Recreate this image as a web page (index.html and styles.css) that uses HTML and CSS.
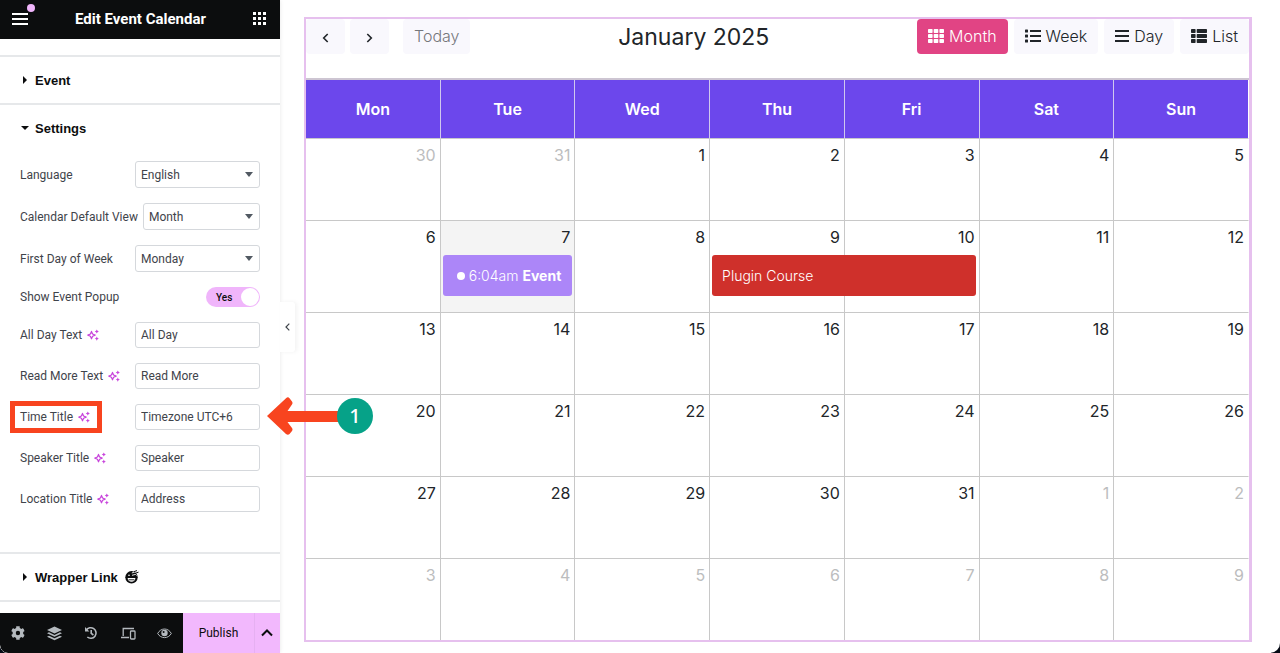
FILE: index.html
```html
<!DOCTYPE html>
<html lang="en">
<head>
<meta charset="utf-8">
<meta name="viewport" content="width=device-width, initial-scale=1">
<title>Edit Event Calendar</title>
<link rel="stylesheet" href="styles.css">
</head>
<body>
<svg class="sprite" aria-hidden="true">
  <symbol id="sparkle" viewBox="0 0 12 12">
    <path d="M4.5 2.4 5.6 5 8.2 6.1 5.6 7.2 4.5 9.8 3.4 7.2.8 6.1 3.4 5Z" fill="none" stroke="currentColor" stroke-width="1.2" stroke-linejoin="round"/>
    <path d="m9.8.4.7 1.400 1.400.7-1.400.7-.7 1.400-.7-1.400-1.400-.7 1.400-.7ZM9.800 7.500l.7 1.400 1.400.7-1.400.7-.7 1.400-.7-1.400-1.400-.7 1.400-.7Z" fill="currentColor"/>
  </symbol>
</svg>
<div class="app">
  <aside class="panel">
    <header class="panel-header">
      <button class="icon-button menu" aria-label="Menu">
        <svg width="16" height="12" viewBox="0 0 16 12"><path d="M0 1h16M0 6h16M0 11h16" stroke="#fff" stroke-width="2"/></svg>
        <span class="notice"></span>
      </button>
      <h1>Edit Event Calendar</h1>
      <button class="icon-button" aria-label="Widgets">
        <svg width="13" height="13" viewBox="0 0 13 13" fill="#fff"><path d="M0 0h3v3H0zM5 0h3v3H5zM10 0h3v3h-3zM0 5h3v3H0zM5 5h3v3H5zM10 5h3v3h-3zM0 10h3v3H0zM5 10h3v3H5zM10 10h3v3h-3z"/></svg>
      </button>
    </header>

    <div class="panel-body">
      <section class="section">
        <button class="section-title"><span class="caret"></span>Event</button>
      </section>
      <section class="section">
        <button class="section-title" aria-expanded="true"><span class="caret open"></span>Settings</button>
        <div class="controls">
          <div class="control">
            <label for="language">Language</label>
            <span class="select"><select id="language"><option>English</option></select></span>
          </div>
          <div class="control">
            <label for="view">Calendar Default View</label>
            <span class="select"><select id="view"><option>Month</option></select></span>
          </div>
          <div class="control">
            <label for="first-day">First Day of Week</label>
            <span class="select"><select id="first-day"><option>Monday</option></select></span>
          </div>
          <div class="control">
            <label for="popup">Show Event Popup</label>
            <span class="switch"><input type="checkbox" id="popup" checked><span>Yes</span></span>
          </div>
          <div class="control">
            <label for="all-day">All Day Text <svg class="sparkle"><use href="#sparkle"/></svg></label>
            <input class="text" id="all-day" type="text" value="All Day">
          </div>
          <div class="control">
            <label for="read-more">Read More Text <svg class="sparkle"><use href="#sparkle"/></svg></label>
            <input class="text" id="read-more" type="text" value="Read More">
          </div>
          <div class="control marked">
            <label for="time-title">Time Title <svg class="sparkle"><use href="#sparkle"/></svg></label>
            <input class="text" id="time-title" type="text" value="Timezone UTC+6">
            <div class="pointer">
              <svg width="74" height="38" viewBox="0 0 74 38"><path d="M0 19 19 1.200Q21-.6 22.500 1.200L25 4.500Q26 6 25 7.500L20.500 14H74v11H20.500L25 31Q26 32.500 25 34L22.500 37Q21 38.600 19 37Z" fill="#f8441f"/></svg>
              <span class="step">1</span>
            </div>
          </div>
          <div class="control">
            <label for="speaker">Speaker Title <svg class="sparkle"><use href="#sparkle"/></svg></label>
            <input class="text" id="speaker" type="text" value="Speaker">
          </div>
          <div class="control">
            <label for="location">Location Title <svg class="sparkle"><use href="#sparkle"/></svg></label>
            <input class="text" id="location" type="text" value="Address">
          </div>
        </div>
      </section>
      <section class="section last">
        <button class="section-title"><span class="caret"></span>Wrapper Link
          <svg class="face" width="14" height="14" viewBox="0 0 14 14">
            <circle cx="6.500" cy="7.300" r="6.200" fill="#0c0d0e"/>
            <path d="M2.600 8h7.800c0 2.200-1.700 3.700-3.900 3.700S2.600 10.200 2.600 8Z" fill="#fff"/>
            <path d="M3.600 9.800h5.800" stroke="#0c0d0e" stroke-width=".9"/>
            <path d="M3 5.600q1-1.400 2 0M7 5.300l3.500-.9 1.200 1.200M6.800 3l4-1.400M10.800 0l1.600 2.200" stroke="#fff" stroke-width=".9" fill="none"/>
            <path d="m9 1.600 3-1M10.500 3.200l3-1" stroke="#0c0d0e" stroke-width="1"/>
          </svg>
        </button>
      </section>
    </div>

    <footer class="panel-footer">
      <button class="tool" aria-label="Settings">
        <svg width="14" height="14" viewBox="0 0 512 512"><path fill="currentColor" d="M487 316l-43-25c4-23 4-47 0-70l43-25c5-3 7-9 6-14-11-36-30-69-55-96-4-4-10-5-15-2l-43 24c-18-15-39-27-61-35V24c0-6-4-11-10-12-36-8-74-8-111 0-5 1-9 6-9 12v49c-23 8-43 20-61 35L85 84c-5-3-11-2-14 2-26 27-45 60-56 96-2 5 1 11 5 14l43 25c-4 23-4 47 0 70l-43 25c-4 3-7 9-5 14 11 36 30 69 56 96 3 4 9 5 14 2l43-24c18 15 38 27 61 35v49c0 6 4 11 9 12 37 8 75 8 111 0 6-1 10-6 10-12v-49c22-8 43-20 61-35l43 24c5 3 11 2 15-2 25-27 44-60 55-96 1-5-1-11-6-14zM254 336a80 80 0 1 1 0-160 80 80 0 0 1 0 160z"/></svg>
      </button>
      <button class="tool" aria-label="Structure">
        <svg width="15" height="15" viewBox="0 0 15 15" fill="currentColor"><path d="M7.500.5 15 4 7.500 7.500 0 4Z"/><path d="m2 6.300 5.500 2.600L13 6.300l2 1-7.500 3.500L0 7.300Z"/><path d="m2 9.700 5.500 2.600L13 9.700l2 1-7.500 3.600L0 10.700Z"/></svg>
      </button>
      <button class="tool" aria-label="History">
        <svg width="14" height="14" viewBox="0 0 14 14" fill="none" stroke="currentColor" stroke-width="1.600"><path d="M2.200 4.300A5.300 5.300 0 1 1 3.300 11M7.200 4v3.300l2.200 1.700"/><path d="M1 1v4.400h4.400Z" fill="currentColor" stroke="none"/></svg>
      </button>
      <button class="tool" aria-label="Responsive mode">
        <svg width="15" height="13" viewBox="0 0 15 13" fill="none" stroke="currentColor" stroke-width="1.300"><path d="M2.200 9V1.500H13M0 10.500h8" /><rect x="9.500" y="4" width="4.500" height="8" rx=".8"/></svg>
      </button>
      <button class="tool" aria-label="Preview">
        <svg width="15" height="11" viewBox="0 0 15 11" fill="none" stroke="currentColor"><path d="M.7 5.500C3.700-.5 11.300-.5 14.300 5.500 11.300 11 3.700 11 .7 5.500Z"/><circle cx="7.500" cy="5" r="3.200" fill="currentColor" stroke="none"/><circle cx="6.600" cy="4" r="1" fill="#0c0d0e" stroke="none"/></svg>
      </button>
      <button class="publish">Publish</button>
      <button class="publish-more" aria-label="Save options">
        <svg width="12" height="8" viewBox="0 0 12 8"><path d="m1 6.500 5-5 5 5" fill="none" stroke="#0c0d0e" stroke-width="2"/></svg>
      </button>
    </footer>
    <button class="collapse" aria-label="Hide panel">
      <svg width="5" height="8" viewBox="0 0 5 8"><path d="M4.300.7 1 4l3.300 3.300" fill="none" stroke="#3f444b" stroke-width="1.200"/></svg>
    </button>
  </aside>

  <main class="preview">
    <div class="calendar">
      <div class="toolbar">
        <div class="group">
          <button class="nav" aria-label="Previous"><svg width="7" height="10" viewBox="0 0 7 10"><path d="M5.700 1 1.700 5l4 4" fill="none" stroke="#212529" stroke-width="1.600"/></svg></button>
          <button class="nav" aria-label="Next"><svg width="7" height="10" viewBox="0 0 7 10"><path d="m1.300 1 4 4-4 4" fill="none" stroke="#212529" stroke-width="1.600"/></svg></button>
          <button class="today" disabled>Today</button>
        </div>
        <h2>January 2025</h2>
        <div class="group views">
          <button class="view active"><svg width="16" height="14" viewBox="0 0 16 14" fill="currentColor"><rect width="4.600" height="4" rx=".7"/><rect x="5.700" width="4.600" height="4" rx=".7"/><rect x="11.400" width="4.600" height="4" rx=".7"/><rect y="5" width="4.600" height="4" rx=".7"/><rect x="5.700" y="5" width="4.600" height="4" rx=".7"/><rect x="11.400" y="5" width="4.600" height="4" rx=".7"/><rect y="10" width="4.600" height="4" rx=".7"/><rect x="5.700" y="10" width="4.600" height="4" rx=".7"/><rect x="11.400" y="10" width="4.600" height="4" rx=".7"/></svg>Month</button>
          <button class="view"><svg width="16" height="14" viewBox="0 0 16 14" fill="currentColor"><rect y=".5" width="3" height="3" rx=".6"/><rect y="5.500" width="3" height="3" rx=".6"/><rect y="10.500" width="3" height="3" rx=".6"/><path d="M5 1h11v2H5zM5 6h11v2H5zM5 11h11v2H5z"/></svg>Week</button>
          <button class="view"><svg width="14" height="14" viewBox="0 0 14 14" fill="currentColor"><path d="M0 1h14v2H0zM0 6h14v2H0zM0 11h14v2H0z"/></svg>Day</button>
          <button class="view"><svg width="16" height="14" viewBox="0 0 16 14" fill="currentColor"><rect width="4.600" height="4" rx=".7"/><rect x="5.700" width="10.300" height="4" rx=".7"/><rect y="5" width="4.600" height="4" rx=".7"/><rect x="5.700" y="5" width="10.300" height="4" rx=".7"/><rect y="10" width="4.600" height="4" rx=".7"/><rect x="5.700" y="10" width="10.300" height="4" rx=".7"/></svg>List</button>
        </div>
      </div>
      <div class="grid">
        <table>
          <thead>
            <tr><th>Mon</th><th>Tue</th><th>Wed</th><th>Thu</th><th>Fri</th><th>Sat</th><th>Sun</th></tr>
          </thead>
          <tbody>
            <tr><td class="other">30</td><td class="other">31</td><td>1</td><td>2</td><td>3</td><td>4</td><td>5</td></tr>
            <tr>
              <td>6</td>
              <td class="current">7<a class="event timed" href="#event"><span class="dot"></span><span>6:04am</span><b>Event</b></a></td>
              <td>8</td>
              <td>9<a class="event course" href="#course">Plugin Course</a></td>
              <td>10</td><td>11</td><td>12</td>
            </tr>
            <tr><td>13</td><td>14</td><td>15</td><td>16</td><td>17</td><td>18</td><td>19</td></tr>
            <tr><td>20</td><td>21</td><td>22</td><td>23</td><td>24</td><td>25</td><td>26</td></tr>
            <tr><td>27</td><td>28</td><td>29</td><td>30</td><td>31</td><td class="other">1</td><td class="other">2</td></tr>
            <tr><td class="other">3</td><td class="other">4</td><td class="other">5</td><td class="other">6</td><td class="other">7</td><td class="other">8</td><td class="other">9</td></tr>
          </tbody>
        </table>
      </div>
    </div>
  </main>
</div>
</body>
</html>
```
FILE: styles.css
```css
* { box-sizing: border-box; }

body {
  margin: 0;
  background: #050a14;
  font-family: Roboto, "Liberation Sans", sans-serif;
  font-size: 12px;
  color: #3f444b;
}

button {
  border: 0;
  padding: 0;
  background: none;
  font: inherit;
  color: inherit;
}

.sprite { position: absolute; width: 0; height: 0; }

.app {
  display: flex;
  min-height: 100vh;
  background: #fff;
  border-radius: 0 0 10px 8px;
  overflow: hidden;
}

/* Editor panel */
.panel {
  position: relative;
  z-index: 1;
  display: flex;
  flex-direction: column;
  flex: 0 0 280px;
  background: #fff;
  box-shadow: 0 0 4px rgba(0, 0, 0, .1);
}

.panel-header {
  display: flex;
  align-items: center;
  justify-content: space-between;
  height: 39px;
  padding: 0 14px 2px 12px;
  background: #0c0d0e;
  color: #fff;
}

.panel-header h1 {
  margin: 0;
  font-size: 15px;
  font-weight: 700;
}

.icon-button { display: flex; position: relative; }

.notice {
  position: absolute;
  top: -9px;
  right: -7px;
  width: 8px;
  height: 8px;
  border-radius: 50%;
  background: #f0b5fb;
}

.panel-body { flex: 1; padding: 16px 0 11px; }

.section { border-top: 2px solid #e6e8ea; }
.section.last { border-bottom: 2px solid #e6e8ea; }

.section-title {
  display: flex;
  align-items: center;
  width: 100%;
  height: 46px;
  padding: 0 20px;
  font-family: "Liberation Sans", Arial, sans-serif;
  font-size: 13px;
  font-weight: 700;
  color: #0c0d0e;
}

.caret {
  width: 12px;
  margin-right: 3px;
}

.caret::before {
  content: "";
  display: block;
  width: 0;
  margin-left: 3px;
  border: 4px solid transparent;
  border-left-color: #0c0d0e;
  border-right: 0;
}

.caret.open::before {
  margin-left: 1px;
  border: 4px solid transparent;
  border-top-color: #0c0d0e;
  border-bottom: 0;
}

.face { margin-left: 7px; }

.controls {
  display: grid;
  gap: 15px;
  padding: 10px 20px 40px;
}

.control {
  position: relative;
  display: flex;
  align-items: center;
  justify-content: space-between;
  gap: 5px;
}

.control label {
  position: relative;
  display: flex;
  align-items: center;
  gap: 5px;
  white-space: nowrap;
}

.sparkle {
  width: 12px;
  height: 12px;
  color: #c846dc;
}

.select {
  position: relative;
  flex: 0 1 125px;
  min-width: 0;
}

.select::after {
  content: "";
  position: absolute;
  top: 11px;
  right: 7px;
  border: 4px solid transparent;
  border-top: 5px solid #515962;
  border-bottom: 0;
  pointer-events: none;
}

.select select,
.text {
  width: 100%;
  height: 27px;
  padding: 0 5px;
  border: 1px solid #d5d8dc;
  border-radius: 3px;
  background: #fff;
  color: #3f444b;
  font: inherit;
  appearance: none;
}

.text { width: 125px; height: 26px; }

.switch {
  position: relative;
  display: flex;
  align-items: center;
  width: 54px;
  height: 20px;
  padding-left: 10px;
  border-radius: 10px;
  background: #f0b5fb;
  color: #0c0d0e;
  font-size: 10px;
  font-weight: 500;
}

.switch input {
  appearance: none;
  position: absolute;
  inset: 0;
  margin: 0;
}

.switch::after {
  content: "";
  position: absolute;
  top: 1px;
  right: 1px;
  width: 18px;
  height: 18px;
  border-radius: 50%;
  background: #fff;
  pointer-events: none;
}

/* Callout over the time title control */
.marked label::before {
  content: "";
  position: absolute;
  inset: -9px -12px -9px -10px;
  border: 5px solid #f8441f;
}

.pointer {
  position: absolute;
  top: -7px;
  left: 247px;
  display: flex;
  align-items: center;
}

.step {
  width: 36px;
  margin-left: -4px;
  border-radius: 50%;
  background: #06a288;
  color: #fff;
  font: 500 20px/36px "Noto Sans", sans-serif;
  text-align: center;
}

.panel-footer {
  display: flex;
  height: 40px;
  background: #0c0d0e;
  color: #b4b9be;
  border-radius: 0 0 0 8px;
}

.tool,
.publish,
.publish-more {
  display: flex;
  align-items: center;
  justify-content: center;
}

.tool { flex: 1; }

.publish,
.publish-more {
  background: #f2b8fd;
  color: #0c0d0e;
}

.publish { width: 71px; }
.publish-more { width: 26px; border-left: 1px solid #e6b0f2; }

.collapse {
  position: absolute;
  top: 302px;
  left: 100%;
  display: flex;
  align-items: center;
  justify-content: center;
  width: 15px;
  height: 50px;
  border-radius: 0 3px 3px 0;
  background: #fff;
  box-shadow: 2px 0 4px rgba(0, 0, 0, .05);
}

/* Calendar preview */
.preview {
  flex: 1;
  min-width: 0;
  padding: 17px 28px 10px 24px;
  font-family: Inter, "Liberation Sans", sans-serif;
  font-size: 16px;
  color: #212529;
}

.calendar {
  border: 2px solid #e6c0ee;
  border-right-width: 3px;
}

.toolbar {
  display: flex;
  align-items: center;
  justify-content: space-between;
  height: 35px;
  margin-bottom: 24px;
}

.toolbar h2 {
  margin: 0;
  font-size: 23px;
  font-weight: 400;
}

.group { display: flex; gap: 5px; }
.views { gap: 6px; }

.nav,
.today,
.view {
  display: flex;
  align-items: center;
  justify-content: center;
  height: 35px;
  border-radius: 4px;
  background: #f9f8fd;
  font-weight: 300;
}

.nav {
  width: 39px;
  padding: 3px 1px 0 0;
}

.today {
  margin-left: 9px;
  padding: 0 11px 2px;
  color: #75777b;
}

.view { gap: 5px; padding: 0 11px 2px; }

.view.active {
  background: #e14484;
  color: #fff;
}

.grid { border-top: 2px solid #cdc5d2; }

table {
  width: 100%;
  table-layout: fixed;
  border-collapse: separate;
  border-spacing: 0;
}

th {
  height: 59px;
  padding: 0;
  border-right: 1px solid #d0c8ee;
  border-bottom: 1px solid #c8c8cc;
  background: #6c47ec;
  color: #fff;
  font-weight: 600;
}

td {
  position: relative;
  height: 82px;
  padding: 4px 4px 0;
  border-right: 1px solid #c8c8c8;
  border-bottom: 1px solid #c8c8c8;
  line-height: 24px;
  text-align: right;
  vertical-align: top;
}

th:last-child { border-right-color: #fff; }
td:last-child { border-right-color: #fff; }
tr:last-child td { height: 81px; border-bottom: 0; }

.other { color: #bcbdbe; }
.current { background: #f4f4f4; }

.event {
  display: flex;
  align-items: center;
  gap: 4px;
  height: 41px;
  margin: 6px -2px 16px;
  padding: 0 10px;
  border-radius: 3px;
  color: #fff;
  font-size: 14px;
  font-weight: 300;
  line-height: 21px;
  text-decoration: none;
  white-space: nowrap;
}

.event b { font-weight: 700; }

.timed { padding-left: 14px; background: #ac86f8; }

.dot {
  width: 8px;
  height: 8px;
  border-radius: 50%;
  background: #fff;
}

/* Runs over this day and the next one */
.course {
  position: absolute;
  z-index: 1;
  top: 34px;
  left: 2px;
  width: calc(200% - 4px);
  margin: 0;
  background: #cf302b;
}
```
